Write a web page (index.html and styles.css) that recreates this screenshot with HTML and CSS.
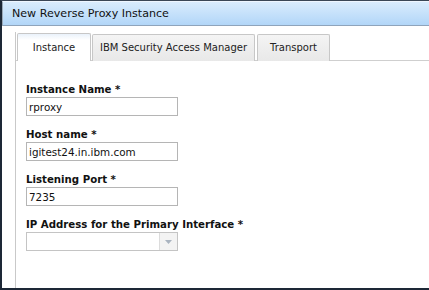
FILE: index.html
```html
<!DOCTYPE html>
<html>
<head>
<meta charset="utf-8">
<link rel="stylesheet" href="styles.css">
</head>
<body>
<div class="dialog">
  <div class="titlebar">New Reverse Proxy Instance</div>
  <div class="body">
    <div class="tabpane">
      <div class="tabs">
        <div class="tab active t1">Instance</div>
        <div class="tab t2">IBM Security Access Manager</div>
        <div class="tab t3">Transport</div>
      </div>
      <div class="content">
        <div class="field">
          <label class="lbl">Instance Name *</label>
          <div class="input">rproxy</div>
        </div>
        <div class="field">
          <label class="lbl">Host name *</label>
          <div class="input">igitest24.in.ibm.com</div>
        </div>
        <div class="field">
          <label class="lbl">Listening Port *</label>
          <div class="input">7235</div>
        </div>
        <div class="field">
          <label class="lbl">IP Address for the Primary Interface *</label>
          <div class="select"><div class="sel-text"></div><div class="sel-btn"><svg width="7" height="4" viewBox="0 0 7 4"><path d="M0 0h7L3.5 4z" fill="#aab4c0"/></svg></div></div>
        </div>
      </div>
    </div>
  </div>
</div>
</body>
</html>
```
FILE: styles.css
```css
html, body { margin: 0; padding: 0; background: #fff; }
body { width: 429px; height: 290px; overflow: hidden; font-family: "DejaVu Sans", Verdana, sans-serif; }
.dialog {
  width: 429px; height: 290px; box-sizing: border-box;
  border-left: 2px solid #1d2836;
  border-top: 1px solid #3a4656;
  border-bottom: 2px solid #1d2836;
  display: flex; flex-direction: column;
}
.titlebar {
  height: 25px; box-sizing: border-box;
  background: linear-gradient(#d9ecfd, #b2d6f8);
  border-top: 1px solid #eef6ff;
  border-bottom: 1px solid #8fa4bb;
  border-left: 1px solid #9aa9b8;
  font-size: 11.1px; color: #111;
  padding: 5px 0 0 9px;
}
.body { flex: 1; padding: 6px 0 0 13px; display: flex; }
.tabpane { flex: 1; border-left: 1px solid #c9c9c9; display: flex; flex-direction: column; }
.tabs {
  display: flex; align-items: flex-end; height: 29px; box-sizing: border-box;
  border-bottom: 1px solid #cfcfcf; padding-left: 1px;
}
.tab {
  height: 27px; box-sizing: border-box; margin-bottom: -1px; margin-right: 2px;
  border: 1px solid #c7c7c7; border-bottom: none;
  background: linear-gradient(#f4f4f4, #e8e8e8);
  font-size: 10px; color: #222; padding-top: 7px; text-align: center;
  border-radius: 2px 2px 0 0;
}
.t1 { width: 74px; margin-right: 1px; }
.t2 { width: 163px; }
.t3 { width: 73px; }
.tab.active {
  height: 28px; background: linear-gradient(#eaf2fb 0, #fff 6px); border-color: #c7c7c7;
  padding-top: 8px;
}
.content { padding: 22px 0 0 10px; }
.field { margin-bottom: 12px; }
.lbl { display: block; font-size: 10.2px; font-weight: bold; color: #111; height: 14px; line-height: 14px; }
.input {
  width: 152px; height: 19px; box-sizing: border-box;
  border: 1px solid #b5b5b5; font-size: 10.4px; color: #111;
  padding: 2px 0 0 2px; line-height: 14px;
}
.select { width: 152px; height: 19px; box-sizing: border-box; border: 1px solid #c4c4c4; display: flex; }
.sel-text { flex: 1; }
.sel-btn { width: 17px; border-left: 1px solid #dcdcdc; background: #f3f3f3; display: flex; align-items: center; justify-content: center; }
```
